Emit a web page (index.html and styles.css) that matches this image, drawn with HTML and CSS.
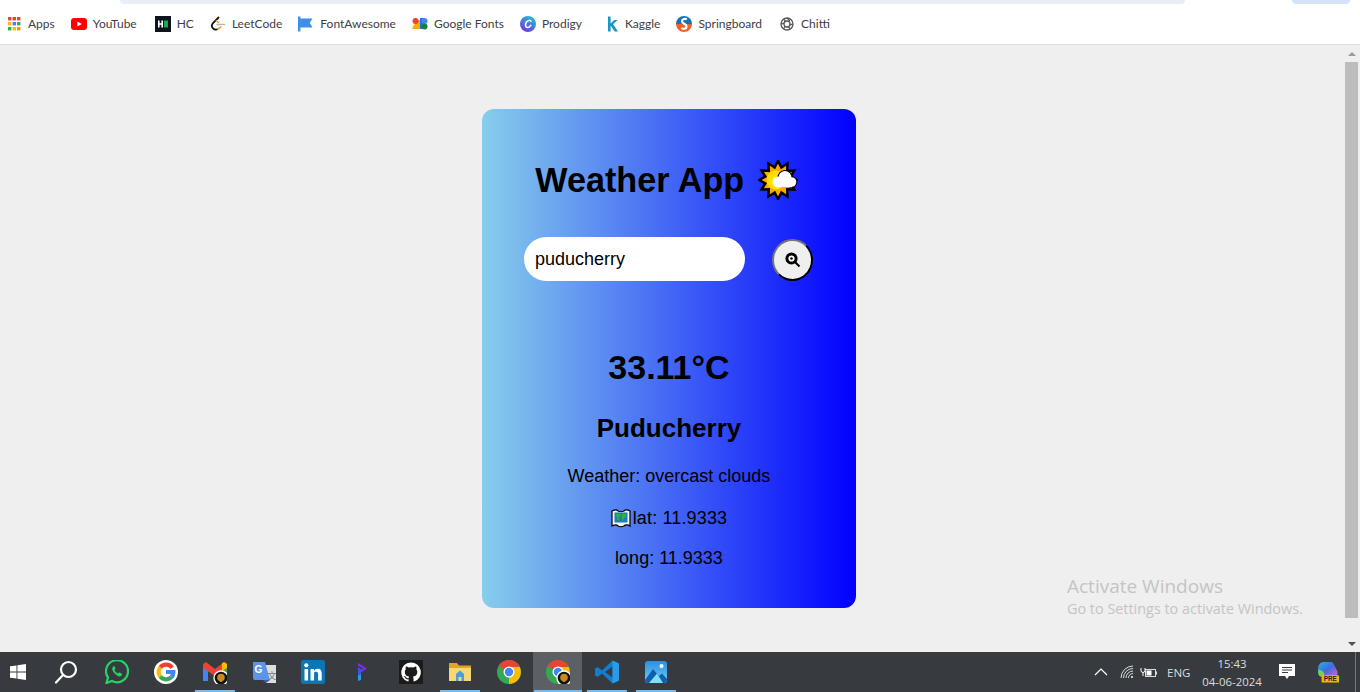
FILE: index.html
```html
<!DOCTYPE html>
<html lang="en">
<head>
  <meta charset="UTF-8" />
  <meta name="viewport" content="width=device-width, initial-scale=1.0" />
  <title>Weather App</title>
  <link rel="stylesheet" href="styles.css">
</head>
<body>
  <header class="browser">
    <div class="tabs-edge">
      <span class="omnibox"></span>
      <span class="avatar"></span>
    </div>
    <nav class="bookmarks">
      <a class="mark">
        <svg class="mark-icon" viewBox="0 0 16 16">
          <rect x="2" y="1" width="3.400" height="3.400" fill="#ea4335"/><rect x="6.600" y="1" width="3.400" height="3.400" fill="#ea4335"/><rect x="11" y="1" width="3.400" height="3.400" fill="#ea4335"/>
          <rect x="2" y="6" width="3.400" height="3.400" fill="#fbbc04"/><rect x="6.600" y="6" width="3.400" height="3.400" fill="#4285f4"/><rect x="11" y="6" width="3.400" height="3.400" fill="#34a853"/>
          <rect x="2" y="11" width="3.400" height="3.400" fill="#34a853"/><rect x="6.600" y="11" width="3.400" height="3.400" fill="#fbbc04"/><rect x="11" y="11" width="3.400" height="3.400" fill="#f29900"/>
        </svg>
        Apps
      </a>
      <a class="mark">
        <svg class="mark-icon" viewBox="0 0 16 16"><rect y="2" width="16" height="12" rx="3.200" fill="#f00"/><path d="M6.400 5.400v5.200L10.800 8z" fill="#fff"/></svg>
        YouTube
      </a>
      <a class="mark mark-hc">
        <svg class="mark-icon" viewBox="0 0 16 16"><rect width="16" height="16" fill="#0e141e"/><path d="M3 4.500h1.600v2.700h1.800V4.500H8v7H6.400V8.800H4.600v2.700H3z" fill="#fff"/><rect x="9" y="4.500" width="4" height="7" fill="#1ba94c"/></svg>
        HC
      </a>
      <a class="mark">
        <svg class="mark-icon" viewBox="0 0 16 16" fill="none"><path d="M9 1 3 7.200c-1.500 1.700-1.300 3.800 0 5.100 1.500 1.500 3.300 1.500 4.800.6" stroke="#111" stroke-width="1.800"/><path d="M6.500 8.500h8.500" stroke="#b3b3b3" stroke-width="1.400"/><path d="M5.800 4.300 9 7" stroke="#f89f1b" stroke-width="1.400"/><path d="M7.500 13.100c1.500-.4 2.800-1.500 3.700-2.600" stroke="#f89f1b" stroke-width="1.800"/></svg>
        LeetCode
      </a>
      <a class="mark">
        <svg class="mark-icon" viewBox="0 0 16 16"><rect x="0" y="0.500" width="2.400" height="15" fill="#3f8fe8"/><path d="M2 2.500h12.500l-2.700 4.300 2.700 4.700H2z" fill="#3f8fe8"/></svg>
        FontAwesome
      </a>
      <a class="mark">
        <svg class="mark-icon" viewBox="0 0 16 16"><path d="M0 13 4.500 4H8v9z" fill="#f9ab00"/><circle cx="3.500" cy="5" r="3" fill="#ea4335"/><rect x="8" y="2" width="4" height="11" fill="#1a73e8"/><circle cx="12.500" cy="5" r="3" fill="#4285f4"/><circle cx="12.500" cy="10.500" r="3" fill="#188038"/></svg>
        Google Fonts
      </a>
      <a class="mark">
        <svg class="mark-icon" viewBox="0 0 16 16">
          <defs><linearGradient id="canva" x1="0.800" y1="0" x2="0.200" y2="1"><stop offset="0" stop-color="#19c5d3"/><stop offset="1" stop-color="#7a2fe0"/></linearGradient></defs>
          <circle cx="8" cy="8" r="8" fill="url(#canva)"/><path d="M11 5.200C10 3.800 7.800 4.200 6.500 6 5 8.200 5.200 11.600 7.500 11.600c1.300 0 2.500-1 3.300-2.200" fill="none" stroke="#fff" stroke-width="1.500" stroke-linecap="round"/>
        </svg>
        Prodigy
      </a>
      <a class="mark mark-kaggle">
        <svg class="mark-icon" viewBox="0 0 16 16"><path d="M4 0.500h2.600v7.100L10.300 4H13.500L9.200 8.300 14 15.500h-3.300L6.600 9.700v5.800H4z" fill="#1a96c4"/></svg>
        Kaggle
      </a>
      <a class="mark">
        <svg class="mark-icon" viewBox="0 0 16 16"><path d="M0 8a8 8 0 0 1 16 0z" fill="#1673b5"/><path d="M0 8a8 8 0 0 0 16 0z" fill="#f0602a"/><path d="M10.800 3.400C9.400 2.400 6 2.800 6 5.200c0 2.800 4.600 2.400 4.600 5.400 0 2.200-3.400 2.800-5.200 1.400" fill="none" stroke="#fff" stroke-width="2.200"/></svg>
        Springboard
      </a>
      <a class="mark mark-chitti">
        <svg class="mark-icon" viewBox="0 0 16 16" fill="none" stroke="#5a5a5a" stroke-width="1.300"><circle cx="8" cy="8" r="6"/><circle cx="8" cy="8" r="3"/><path d="M8 2 11 5M14 8 10.800 8.800M11.500 13 9 10.800M4.500 13 6 10.500M2 8l3.200-.8M4.500 3 6.500 5.400"/></svg>
        Chitti
      </a>
    </nav>
  </header>

  <div class="viewport">
    <main class="page">
      <section class="card">
        <h1 class="title">Weather App
          <svg class="sun" viewBox="0 0 40 40">
            <polygon points="39,20 32.56,23.36 36.45,29.5 29.19,29.19 29.5,36.45 23.36,32.56 20,39 16.64,32.56 10.5,36.45 10.81,29.19 3.55,29.5 7.44,23.36 1,20 7.44,16.64 3.55,10.5 10.81,10.81 10.5,3.55 16.64,7.44 20,1 23.36,7.44 29.5,3.55 29.19,10.81 36.45,10.5 32.56,16.64" fill="#ffa800" stroke="#000" stroke-width="2.400"/>
            <circle cx="18" cy="20" r="9.500" fill="#ffe000"/>
            <circle cx="27" cy="17.500" r="7.500" fill="#000"/>
            <circle cx="33.500" cy="22" r="5.800" fill="#000"/>
            <circle cx="20" cy="22" r="5.500" fill="#fff"/>
            <circle cx="27" cy="17.500" r="6.500" fill="#fff"/>
            <circle cx="33.500" cy="22" r="4.800" fill="#fff"/>
            <rect x="19" y="21" width="15" height="6" fill="#fff"/>
          </svg>
        </h1>
        <div class="search">
          <input class="search-input" type="text" value="puducherry" />
          <button class="search-btn" type="button" aria-label="Search">
            <svg viewBox="0 0 16 16" class="search-icon">
              <circle cx="6.500" cy="6.500" r="4.600" fill="#fff" stroke="#000" stroke-width="3"/>
              <circle cx="6.500" cy="6.500" r="1.300" fill="#000"/>
              <path d="M10 10l4.500 4.500" stroke="#000" stroke-width="2"/>
            </svg>
          </button>
        </div>
        <h2 class="temp">33.11°C</h2>
        <h3 class="city">Puducherry</h3>
        <p class="line line-weather">Weather: overcast clouds</p>
        <p class="line line-lat">
          <svg class="map" viewBox="0 0 20 20">
            <path d="M1 3c3-1.500 5-1.500 6 0 2 1 4 1 6 0 1-1.500 4-1.500 6 0v15c-2-1.500-5-1.500-6 0-2 1-4 1-6 0-1-1.500-3-1.500-6 0z" fill="#f4f4f4" stroke="#000" stroke-width="1.200"/>
            <rect x="3.500" y="4.500" width="13" height="10" fill="#1c7fb8"/>
            <path d="M5 6h4l1 2-2 1v3H6V9L5 8zM11 6h4v3l-2 1-1 3-1-2z" fill="#34b233"/>
          </svg>lat: 11.9333</p>
        <p class="line line-long">long: 11.9333</p>
      </section>
      <div class="activate">
        <div class="activate-title">Activate Windows</div>
        <div class="activate-sub">Go to Settings to activate Windows.</div>
      </div>
    </main>
    <aside class="scrollbar">
      <span class="arrow arrow-up"></span>
      <span class="thumb"></span>
      <span class="arrow arrow-down"></span>
    </aside>
  </div>

  <footer class="taskbar">
    <div class="task-start">
      <svg class="win" viewBox="0 0 16 16"><path d="M0 2.300 6.500 1.400V7.500H0zM7.400 1.300 16 0V7.500H7.400zM0 8.500H6.500V14.600L0 13.700zM7.400 8.500H16V16L7.400 14.700z" fill="#fff"/></svg>
    </div>
    <div class="task task-search">
      <svg class="task-icon" viewBox="0 0 24 24" fill="none" stroke="#fff" stroke-width="2.200"><circle cx="14.500" cy="9.500" r="7.500"/><path d="M9 15 2 22.500" stroke-linecap="round"/></svg>
    </div>
    <div class="task">
      <svg class="task-icon" viewBox="0 0 24 24"><path d="M1.500 23 3 17.500A11 11 0 1 1 7 21z" fill="none" stroke="#25d366" stroke-width="2.200"/><path d="M8.500 6.500c-2 1.500-1.500 4 1 6.800 2.500 2.800 5 4 7 2.500l.5-2-3-1.500-1.200 1.200c-1.500-.8-2.700-2-3.300-3.500l1-1.200-1.300-3z" fill="#25d366"/></svg>
    </div>
    <div class="task">
      <svg class="task-icon" viewBox="0 0 24 24" fill="none" stroke-width="4.200"><circle cx="12" cy="12" r="12" fill="#fff" stroke="none"/><path d="M18.200 7.800A7.500 7.500 0 0 0 6.300 7.500" stroke="#ea4335"/><path d="M6.300 7.500a7.500 7.500 0 0 0 0 9" stroke="#fbbc05"/><path d="M6.300 16.500a7.500 7.500 0 0 0 11 .8" stroke="#34a853"/><path d="M17.300 17.300c1.500-1.300 2-3 2-5.300H12" stroke="#4285f4"/></svg>
    </div>
    <div class="task task-open">
      <svg class="task-icon" viewBox="0 0 24 24"><path d="M0 6v15h5V9z" fill="#4285f4"/><path d="M19 9v12h5V6z" fill="#34a853"/><path d="M0 4 0 8 12 16 24 8V4L21 2 12 9 3 2z" fill="#ea4335"/><path d="M19 3.500 21 2 24 4v4L19 11z" fill="#fbbc04"/><circle cx="18" cy="18" r="7" fill="#111" stroke="#fff" stroke-width="1.300"/><circle cx="18" cy="17.500" r="3.800" fill="#c98a1b"/><rect x="16.800" y="19" width="2.400" height="3" fill="#c98a1b"/></svg>
    </div>
    <div class="task">
      <svg class="task-icon" viewBox="0 0 24 24"><path d="M12 5h12v18H14z" fill="#dedede"/><path d="M1 2h12l5 18H3a2 2 0 0 1-2-2z" fill="#5a95ea"/><path d="M11 20h7l-4 3z" fill="#3a60b5"/><text x="6.500" y="13" class="gt-letter">G</text><text x="15.500" y="19" class="gt-char">文</text></svg>
    </div>
    <div class="task">
      <svg class="task-icon" viewBox="0 0 24 24"><rect width="24" height="24" rx="2.500" fill="#0a77b5"/><rect x="3.500" y="9" width="3.600" height="11.500" fill="#fff"/><circle cx="5.300" cy="5.300" r="2.100" fill="#fff"/><path d="M9.500 9H13v1.700c.8-1.300 2.100-2 3.700-2 3 0 4 2 4 5v6.800h-3.600v-6c0-1.600-.5-2.700-1.900-2.700S13.100 12 13.100 13.600v6.900H9.500z" fill="#fff"/></svg>
    </div>
    <div class="task">
      <svg class="task-icon" viewBox="0 0 24 24"><path d="M8 3 17 8.500 11 12.500V9.500L13.500 8.300 8 6z" fill="#7a2ff0"/><path d="M8 7.500 11 9V14L8 15.500z" fill="#3f51e8"/><path d="M8 15.500 11 14V20L8 21z" fill="#1ba0e8"/></svg>
    </div>
    <div class="task">
      <svg class="task-icon" viewBox="0 0 24 24"><rect width="24" height="24" fill="#1b1b1b"/><path d="M12 2.500a9.800 9.800 0 0 0-3.100 19.100c.5.100.7-.2.7-.5v-1.800c-2.700.6-3.300-1.200-3.300-1.200-.5-1.100-1.100-1.400-1.100-1.400-.9-.6.100-.6.100-.6 1 .1 1.500 1 1.500 1 .9 1.500 2.300 1.100 2.900.8.100-.6.300-1.100.6-1.300-2.200-.2-4.500-1.100-4.500-4.800 0-1.100.4-1.900 1-2.600-.1-.3-.4-1.300.1-2.600 0 0 .8-.3 2.700 1a9.300 9.300 0 0 1 4.900 0c1.900-1.300 2.700-1 2.700-1 .5 1.300.2 2.300.1 2.600.6.700 1 1.500 1 2.600 0 3.700-2.300 4.600-4.500 4.800.4.300.7.900.7 1.800v2.700c0 .3.200.6.700.5A9.800 9.800 0 0 0 12 2.500z" fill="#fff"/></svg>
    </div>
    <div class="task task-open">
      <svg class="task-icon" viewBox="0 0 24 24"><path d="M1 3h8l2 2.500h12V9H1z" fill="#e0a426"/><path d="M1 8h22v13H1z" fill="#f7d774"/><path d="M8 14 12 10.500 16 14v7H8z" fill="#4a9ce0"/><rect x="10.500" y="17" width="3" height="4" fill="#f7d774"/></svg>
    </div>
    <div class="task">
      <svg class="task-icon" viewBox="0 0 24 24"><circle cx="12" cy="12" r="12" fill="#34a853"/><path d="M12 12 1.600 6A12 12 0 0 1 22.400 6z" fill="#ea4335"/><path d="M12 7h10.800A12 12 0 0 1 12 24z" fill="#fbbc04"/><circle cx="12" cy="12" r="5.500" fill="#fff"/><circle cx="12" cy="12" r="4.200" fill="#4285f4"/></svg>
    </div>
    <div class="task task-active">
      <svg class="task-icon" viewBox="0 0 24 24"><circle cx="12" cy="12" r="12" fill="#34a853"/><path d="M12 12 1.600 6A12 12 0 0 1 22.400 6z" fill="#ea4335"/><path d="M12 7h10.800A12 12 0 0 1 12 24z" fill="#fbbc04"/><circle cx="12" cy="12" r="5.500" fill="#fff"/><circle cx="12" cy="12" r="4.200" fill="#4285f4"/><circle cx="18" cy="18" r="7" fill="#111" stroke="#fff" stroke-width="1.300"/><circle cx="18" cy="17.500" r="3.800" fill="#c98a1b"/><rect x="16.800" y="19" width="2.400" height="3" fill="#c98a1b"/></svg>
    </div>
    <div class="task task-open">
      <svg class="task-icon" viewBox="0 0 24 24"><path d="M17.500 0.500 24 3.500V20.500L17.500 23.500 7 13.500 2.500 17 0 15.500V8.500L2.500 7 7 10.500z" fill="#0f7fd0"/><path d="M17.500 6.500 10 12l7.500 5.500z" fill="#373b3f"/><path d="M17.500 0.500 24 3.500V20.500L17.500 23.500V17.500 6.500z" fill="#2a9be8"/></svg>
    </div>
    <div class="task task-open">
      <svg class="task-icon" viewBox="0 0 24 24">
        <defs><linearGradient id="photos" x1="0" y1="0" x2="0" y2="1"><stop offset="0" stop-color="#2a8fe0"/><stop offset="1" stop-color="#6ed0f5"/></linearGradient></defs>
        <rect x="1" y="1" width="22" height="22" rx="3" fill="url(#photos)"/><circle cx="17.500" cy="6" r="2" fill="#fff"/><path d="M1 20 9 9l6 7 3-2.500L23 19v1a3 3 0 0 1-3 3H4a3 3 0 0 1-3-3z" fill="#0e5fb0"/><path d="M5 23 13 13.500l6 9.500z" fill="#7fe0f5"/>
      </svg>
    </div>

    <div class="tray">
      <svg class="tray-chevron" viewBox="0 0 14 8"><path d="M1 7 7 1l6 6" fill="none" stroke="#fff" stroke-width="1.200"/></svg>
      <svg class="tray-wifi" viewBox="0 0 14 14" fill="none" stroke="#ddd" stroke-width="1"><path d="M1 13A12 12 0 0 1 13 1"/><path d="M3.500 13A9.500 9.500 0 0 1 13 3.500"/><path d="M6 13A7 7 0 0 1 13 6"/><path d="M8.500 13A4.500 4.500 0 0 1 13 8.500"/><circle cx="12" cy="12" r="1" fill="#fff" stroke="none"/></svg>
      <svg class="tray-battery" viewBox="0 0 17 11"><path d="M1 1v2.500a2 2 0 0 0 4 0V1M3 5.500V9" fill="none" stroke="#fff" stroke-width="1"/><rect x="5.500" y="2.500" width="10" height="7" fill="none" stroke="#ddd"/><rect x="6.500" y="3.500" width="5" height="5" fill="#fff"/><rect x="15.500" y="4.500" width="1.500" height="3" fill="#ddd"/></svg>
      <span class="tray-lang">ENG</span>
      <div class="clock">
        <span>15:43</span>
        <span>04-06-2024</span>
      </div>
      <svg class="tray-note" viewBox="0 0 16 16"><path d="M0 0h16v12h-6l-2 3-2-3H0z" fill="#fff"/><path d="M3 3.500h10M3 6h10M3 8.500h6" stroke="#373b3f" stroke-width="1"/></svg>
      <svg class="tray-copilot" viewBox="0 0 24 24">
        <defs><linearGradient id="copilot" x1="0" y1="0" x2="1" y2="1"><stop offset="0" stop-color="#27b2e8"/><stop offset="0.500" stop-color="#3f6be0"/><stop offset="1" stop-color="#e35cc8"/></linearGradient></defs>
        <path d="M7 1h8c2 0 3 1 4 4l2 4c2 2 2 7-1 8H4c-3-1-3-4-3-6 0-6 2-10 6-10z" fill="url(#copilot)"/>
        <path d="M2 9c2 2 5 1 6 5v3H4c-3-1-3-5-2-8z" fill="#7bd048"/>
        <rect x="5" y="15.500" width="19" height="8" rx="1" fill="#f5b800"/>
        <text x="14.500" y="22.300" class="pre-text">PRE</text>
      </svg>
    </div>
    <span class="show-desktop"></span>
  </footer>
</body>
</html>
```

FILE: styles.css
```css
* {
  box-sizing: border-box;
}

html, body {
  height: 100%;
}

body {
  margin: 0;
  display: flex;
  flex-direction: column;
  overflow: hidden;
  font-family: 'Liberation Sans', Arial, sans-serif;
  background-color: #efefef;
}

/* browser chrome */
.browser {
  height: 45px;
  background: white;
  border-bottom: 1px solid #dedede;
}

.tabs-edge {
  height: 4px;
  display: flex;
  justify-content: space-between;
  padding: 0 10px 0 120px;
}

.omnibox {
  width: 1065px;
  background: #e9edf6;
  border-radius: 0 0 8px 8px;
}

.avatar {
  width: 58px;
  background: #d3e3fd;
  border-radius: 0 0 10px 10px;
}

.bookmarks {
  height: 39px;
  display: flex;
  align-items: center;
  gap: 16px;
  padding-left: 6px;
  font-family: 'Lato', sans-serif;
  font-size: 12px;
  color: #3c4043;
}

.mark {
  display: flex;
  align-items: center;
  gap: 6px;
  white-space: nowrap;
}

.mark-icon {
  width: 16px;
  height: 16px;
  flex: none;
}

.mark-hc {
  margin-left: 2px;
}

.mark-kaggle {
  margin-left: 6px;
  gap: 5px;
}

.mark-chitti {
  margin-left: 1px;
}

/* page area */
.viewport {
  flex: 1;
  display: flex;
  min-height: 0;
}

.page {
  flex: 1;
  position: relative;
  display: flex;
  justify-content: center;
  align-items: flex-start;
  padding: 64px 7px 0 0;
}

.card {
  width: 374px;
  height: 499px;
  padding: 51px 42px 0;
  border-radius: 12px;
  background: linear-gradient(to right, skyblue, blue);
  color: black;
  text-align: center;
}

.title {
  margin: 0 0 37px;
  font-size: 34.2px;
  line-height: 40px;
  font-weight: bold;
  white-space: nowrap;
}

.sun {
  width: 40px;
  height: 40px;
  margin-left: 4px;
  margin-right: 5px;
  vertical-align: top;
}

.search {
  display: flex;
  align-items: center;
  justify-content: space-between;
  padding-right: 1px;
}

.search-input {
  width: 221px;
  height: 44px;
  padding: 0 11px;
  border: none;
  border-radius: 22px;
  background: white;
  font-family: 'Liberation Sans', Arial, sans-serif;
  font-size: 18px;
  color: black;
}

.search-btn {
  width: 41px;
  height: 42px;
  padding: 0;
  margin-top: 1px;
  border: 2px solid;
  border-color: #767676 #000 #000 #767676;
  border-radius: 50%;
  background: #efefef;
  display: flex;
  align-items: center;
  justify-content: center;
}

.search-icon {
  width: 16px;
  height: 16px;
}

.temp {
  margin: 66px 0 0;
  font-size: 34px;
  line-height: 40px;
}

.city {
  margin: 25px -40px 0;
  font-size: 26px;
  line-height: 32px;
}

.line {
  margin: 0;
  font-size: 18px;
  line-height: 20px;
  white-space: nowrap;
}

.line-weather {
  margin-top: 22px;
}

.line-lat {
  margin-top: 22px;
  letter-spacing: 0.15px;
}

.line-long {
  margin-top: 20px;
}

.map {
  width: 20px;
  height: 20px;
  margin-right: 2px;
  vertical-align: top;
}

.activate {
  position: absolute;
  left: 1067px;
  top: 528px;
  color: #c4c4c4;
  font-family: 'Open Sans', sans-serif;
  white-space: nowrap;
}

.activate-title {
  font-size: 19px;
  line-height: 26px;
}

.activate-sub {
  font-size: 14.4px;
  line-height: 20px;
}

.scrollbar {
  width: 15px;
  display: flex;
  flex-direction: column;
  padding: 7px 2px 6px 0;
  align-items: center;
}

.arrow {
  width: 0;
  height: 0;
  flex: none;
  border-left: 4px solid transparent;
  border-right: 4px solid transparent;
}

.arrow-up {
  border-bottom: 4px solid #9a9a9a;
  margin-bottom: 6px;
}

.arrow-down {
  border-top: 4px solid #505050;
  margin-top: 24px;
}

.thumb {
  flex: 1;
  width: 13px;
  background: #bdbdbd;
}

/* windows taskbar */
.taskbar {
  height: 40px;
  flex: none;
  display: flex;
  align-items: stretch;
  background: #373b3f;
  color: #eee;
}

.task-start {
  width: 43px;
  display: flex;
  align-items: center;
  padding-left: 10px;
}

.win {
  width: 16px;
  height: 16px;
}

.task {
  width: 49px;
  display: flex;
  align-items: center;
  justify-content: center;
}

.task-search {
  padding-right: 3px;
}

.task-icon {
  width: 24px;
  height: 24px;
}

.task-open {
  background: linear-gradient(#76b9ed, #76b9ed) center bottom / 40px 2px no-repeat;
}

.task-active {
  background: linear-gradient(#76b9ed, #76b9ed) center bottom / 48px 2px no-repeat, #5c5f63;
}

.gt-letter {
  font-family: 'Liberation Sans', sans-serif;
  font-size: 10px;
  font-weight: bold;
  fill: white;
  text-anchor: middle;
}

.gt-char {
  font-family: 'Noto Sans CJK SC', sans-serif;
  font-size: 9px;
  fill: #777;
}

.tray {
  margin-left: auto;
  display: flex;
  align-items: center;
}

.tray-chevron {
  width: 14px;
  height: 8px;
  margin-right: 12px;
}

.tray-wifi {
  width: 14px;
  height: 14px;
  margin-right: 6px;
}

.tray-battery {
  width: 17px;
  height: 11px;
  margin-right: 10px;
}

.tray-lang {
  font-family: 'Open Sans', sans-serif;
  font-size: 11.5px;
  color: #ddd;
  width: 24px;
}

.clock {
  width: 82px;
  margin-right: 6px;
  display: flex;
  flex-direction: column;
  align-items: center;
  gap: 3px;
  font-family: 'Open Sans', sans-serif;
  font-size: 11.4px;
  line-height: 15px;
  color: #ddd;
}

.tray-note {
  width: 16px;
  height: 16px;
  margin-right: 22px;
}

.tray-copilot {
  width: 22px;
  height: 22px;
  margin-right: 20px;
}

.pre-text {
  font-family: 'Liberation Sans', sans-serif;
  font-size: 7px;
  font-weight: bold;
  fill: #222;
  text-anchor: middle;
}

.show-desktop {
  width: 1px;
  margin-left: -4px;
  margin-right: 4px;
  background: #777;
}
```
